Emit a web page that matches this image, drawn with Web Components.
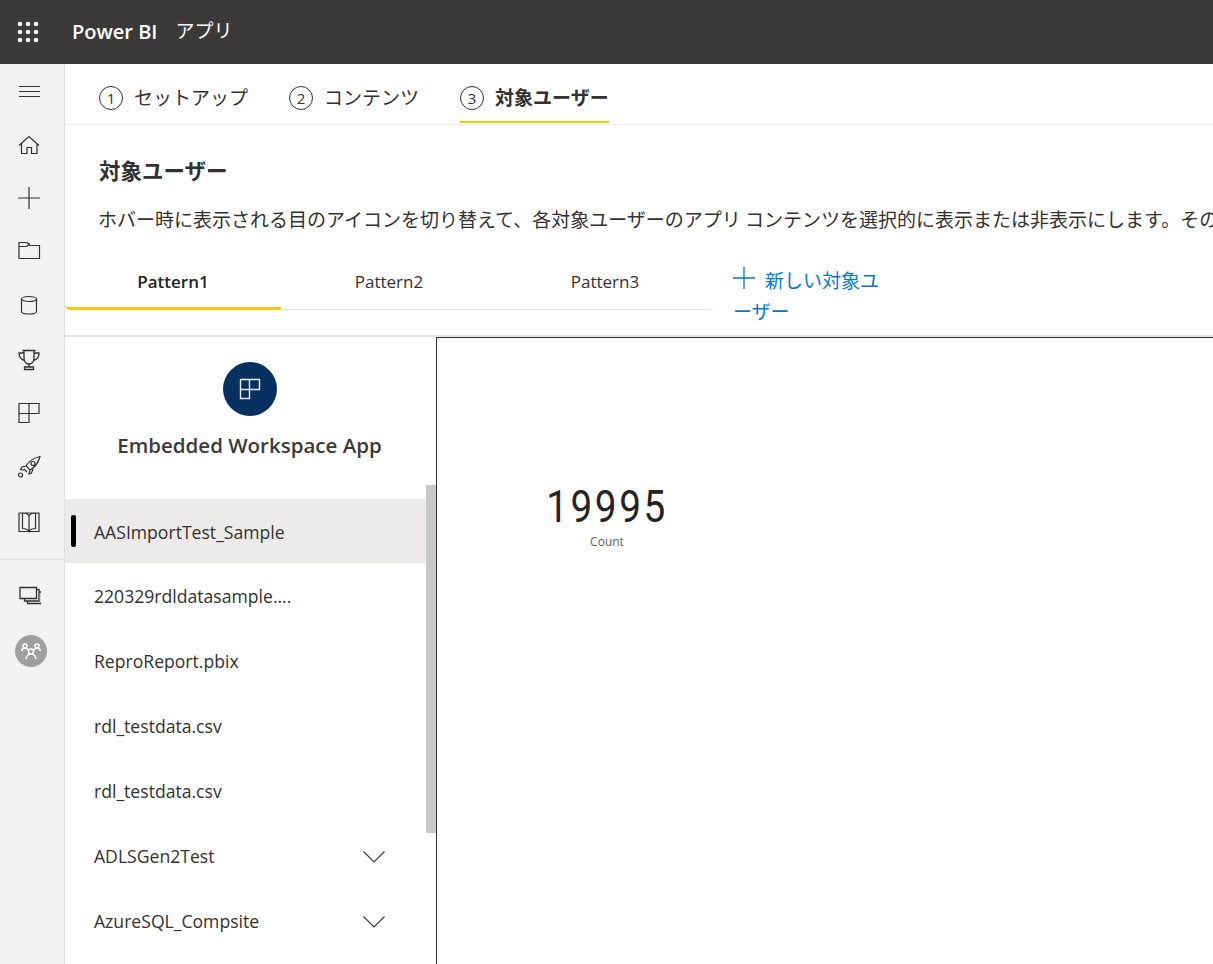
<!DOCTYPE html>
<html lang="ja"><head><meta charset="utf-8"><title>Power BI</title>
<style>
html,body{margin:0;height:964px;overflow:hidden;background:#fff}
body{font-family:"Open Sans","Noto Sans CJK JP",sans-serif;color:#252423}
pbi-app{width:1213px;height:964px}
</style></head><body>
<pbi-app></pbi-app>
<script>
const FONT='"Open Sans","Noto Sans CJK JP",sans-serif';
const JP='"Noto Sans CJK JP",sans-serif';
function def(name,html,init){customElements.define(name,class extends HTMLElement{constructor(){super();this.attachShadow({mode:'open'}).innerHTML=html;}connectedCallback(){init&&init(this)}})}
def('pbi-header',`<style>
:host{display:flex;align-items:center;height:64px;background:#3b3a39;color:#fff;flex:none}
svg{margin-left:17px;flex:none}
b{font:600 20px/26px ${FONT};margin-left:33px}
span{font:400 19px/24px ${JP};margin-left:18px;margin-top:-4px}
</style><svg width="22" height="22" viewBox="0 0 22 22" fill="#f3f2f1"><circle cx="3" cy="3" r="2.3"/><circle cx="11" cy="3" r="2.3"/><circle cx="19" cy="3" r="2.3"/><circle cx="3" cy="11" r="2.3"/><circle cx="11" cy="11" r="2.3"/><circle cx="19" cy="11" r="2.3"/><circle cx="3" cy="19" r="2.3"/><circle cx="11" cy="19" r="2.3"/><circle cx="19" cy="19" r="2.3"/></svg><b>Power BI</b><span>アプリ</span>`);

const ic=(d)=>`<svg width="24" height="24" viewBox="0 0 24 24" fill="none" stroke="#323130" stroke-width="1.2">${d}</svg>`;
def('pbi-rail',`<style>
:host{display:flex;flex-direction:column;align-items:center;width:64px;flex:none;background:#f3f2f1;border-right:1px solid #e1dfdd}
.i{width:100%;box-sizing:border-box;padding-right:7px;display:flex;align-items:center;justify-content:center;flex:none}
svg{display:block}
hr{width:100%;height:1px;border:0;background:#e1dfdd;margin:9px 0 0;flex:none}
.av{width:32px;height:32px;border-radius:50%;background:#a19f9d;display:flex;align-items:center;justify-content:center;margin:5px 3px 0 0;flex:none}
</style>
<div class="i" style="height:54px;margin-bottom:1px">${ic('<path d="M2 7.500h21M2 12.500h21M2 17.500h21" stroke-width="1"/>')}</div>
<div class="i" style="height:51px">${ic('<path d="M2 12.500 12 3.500l10 9M4.500 10.500v10h5.500v-6h4.500v6H20v-10"/>')}</div>
<div class="i" style="height:56px">${ic('<path d="M12 1v22M1 12h22"/>')}</div>
<div class="i" style="height:48px">${ic('<path d="M2 20.500V4.500h8l3 3h9.500v13zM2 8.500h8l3-3"/>')}</div>
<div class="i" style="height:62px">${ic('<ellipse cx="12" cy="6" rx="7.500" ry="2.500"/><path d="M4.500 6v12.500c0 1.500 3 2.500 7.500 2.500s7.500-1 7.500-2.500V6"/>')}</div>
<div class="i" style="height:48px">${ic('<path d="M5.500 2.500h13M7 2.500v7.500c0 3.500 2 6 5 6s5-2.500 5-6V2.500M7 5H2c0 4 1.500 6.500 5.500 7.500M17 5h5c0 4-1.500 6.500-5.500 7.500M12 16v3M7.500 19h9v2.500h-9z" stroke-width="1.300"/>')}</div>
<div class="i" style="height:58px">${ic('<path d="M2 2.500h20v10H12v9H2zM2 12.500h10v-10"/>')}</div>
<div class="i" style="height:50px">${ic('<path d="M23 1.500c-7 1.500-11 4.500-14 9.500l4 4c5-3 8.500-7 10-13.500zM9 11l-4 1-1.500 2.500 3.500.5M13 15l-1 4 2.500-1 1.500-4M7 14l3 3"/><circle cx="16" cy="8.500" r="2"/><circle cx="3.500" cy="20" r="2"/>')}</div>
<div class="i" style="height:58px">${ic('<path transform="translate(0 1)" d="M2 3h20v18.500H2zM5.500 3v15.500c3 0 5 .5 6.500 3V6C11 4 9 3 5.500 3zM18.500 3v15.500c-3 0-5 .5-6.500 3M12 6c1-2 3-3 6.500-3"/>')}</div>
<hr>
<div class="i" style="height:70px">${ic('<path d="M3 4.500h16.500v11H3zM19.500 6.500h2.500V18H7.500v-2.500M22 9h2.500v11.500H10.500V18" stroke-width="1.300"/>')}</div>
<div class="av"><svg width="22" height="22" viewBox="0 0 22 22" fill="none" stroke="#fff" stroke-width="1.600"><circle cx="11" cy="11.500" r="2.500"/><circle cx="5" cy="6" r="2"/><circle cx="17" cy="6" r="2"/><path d="M1.500 11c.5-2 1.500-3 3.500-3 1.500 0 2.500 1 3.500 2M20.500 11c-.5-2-1.500-3-3.500-3-1.500 0-2.500 1-3.500 2M6 19c.5-3 2.500-5 5-5s4.500 2 5 5"/></svg></div>`);

def('pbi-step',`<style>
:host{display:flex;align-items:center;height:60px;box-sizing:border-box;padding-top:6px;gap:11px;position:relative;font:400 19px/24px ${JP};color:#323130;white-space:nowrap}
:host([active]){font-weight:700}
:host([active])::after{content:"";position:absolute;left:0;right:0;bottom:1px;height:2px;background:#f2c811}
i{width:24px;height:24px;box-sizing:border-box;border:1px solid #323130;border-radius:50%;font:400 15px/22px ${FONT};text-align:center;flex:none;margin-top:2px}
</style><i></i><slot></slot>`,el=>{el.shadowRoot.querySelector('i').textContent=el.getAttribute('n')});

def('pbi-steps',`<style>
:host{display:flex;height:61px;flex:none;box-sizing:border-box;border-bottom:1px solid #f0efee;padding-left:34px;gap:41px}
</style><slot></slot>`);

def('pbi-intro',`<style>
:host{display:block;flex:none;overflow:hidden;padding-left:34px;height:138px;box-sizing:border-box;padding-top:30px}
h2{margin:0;font:700 21.500px/30px ${JP};color:#323130}
p{margin:22px 0 0 -1px;font:400 19px/24px ${JP};color:#323130;white-space:nowrap}
</style><h2>対象ユーザー</h2><p>ホバー時に表示される目のアイコンを切り替えて、各対象ユーザーのアプリ コンテンツを選択的に表示または非表示にします。その</p>`);

def('pbi-tab',`<style>
:host{display:flex;align-items:flex-start;justify-content:center;width:216px;height:47px;box-sizing:border-box;padding-top:7px;border-bottom:1px solid #e1dfdd;font:400 17px/24px ${FONT};color:#323130}
:host([active]){font-weight:600;border-bottom:3px solid #f2c811;border-bottom-left-radius:5px;color:#252423}
:host([last]){border-bottom-right-radius:4px}
</style><slot></slot>`);

def('pbi-tabs',`<style>
:host{display:flex;flex:none;height:74px;box-sizing:border-box;border-bottom:2px solid #e6e6e6;align-items:flex-start}
.add{margin-left:20px;width:152px;display:block;color:#0078d4;font:400 19px/30.500px ${JP};margin-top:2px}
svg{vertical-align:-1px;margin-right:10px}
</style><slot></slot><div class="add"><svg width="22" height="22" viewBox="0 0 22 22" fill="none" stroke="#0078d4" stroke-width="1.300"><path d="M11 0v22M0 11h22"/></svg>新しい対象ユーザー</div>`);

def('pbi-row',`<style>
:host{display:flex;align-items:center;height:65px;flex:none;box-sizing:border-box;padding-left:29px;padding-right:51px;position:relative;font:400 17.600px/24px ${FONT};color:#323130;white-space:nowrap}
:host([selected]){background:#edebe9;height:64px;padding-top:1px}
:host([selected])::before{content:"";position:absolute;left:6px;top:16px;width:5px;height:32px;background:#000;border-radius:2px}
span{flex:1}
svg{display:none;flex:none;margin-top:3px}
:host([exp]) svg{display:block}
</style><span><slot></slot></span><svg width="22" height="12" viewBox="0 0 22 12" fill="none" stroke="#3b3a39" stroke-width="1.200"><path d="M.5.500 11 11 21.500.500"/></svg>`);

def('pbi-nav',`<style>
:host{display:block;width:371px;flex:none;position:relative;overflow:hidden}
.head{height:162px;display:flex;flex-direction:column;align-items:center;padding-right:2px;box-sizing:border-box;padding-top:25px}
.logo{width:54px;height:54px;border-radius:50%;background:#05305f;display:flex;align-items:center;justify-content:center}
h1{margin:14px 0 0;font:600 20.500px/30px ${FONT};color:#3b3a39;white-space:nowrap}
.bar{position:absolute;left:361px;top:148px;width:10px;height:348px;background:#c8c8c8}
</style><div class="head"><div class="logo"><svg width="22" height="22" viewBox="0 0 22 22" fill="none" stroke="#e8eef5" stroke-width="1.400"><path d="M1.500 1.500h19v10h-10v9h-9zM1.500 11.500h9v-10"/></svg></div><h1>Embedded Workspace App</h1></div><slot></slot><div class="bar"></div>`);

def('pbi-card',`<style>
:host{display:block;flex:1;border:1px solid #323130;border-right:0;border-bottom:0;box-sizing:border-box;position:relative}
.v{position:absolute;left:70px;top:141px;width:200px;text-align:center}
b{display:block;font:400 45px/55px Roboto,sans-serif;letter-spacing:3px;color:#252423;transform:scaleX(.86)}
small{display:block;font:400 12px/16px ${FONT};color:#605e5c}
</style><div class="v"><b>19995</b><small>Count</small></div>`);

def('pbi-app',`<style>
:host{display:flex;flex-direction:column;font-family:${FONT};overflow:hidden}
.body{display:flex;flex:1;min-height:0}
.main{flex:1;min-width:0;display:flex;flex-direction:column;overflow:hidden}
.split{display:flex;flex:1;min-height:0}
</style>
<pbi-header></pbi-header>
<div class="body"><pbi-rail></pbi-rail>
<div class="main">
<pbi-steps><pbi-step n="1">セットアップ</pbi-step><pbi-step n="2">コンテンツ</pbi-step><pbi-step n="3" active>対象ユーザー</pbi-step></pbi-steps>
<pbi-intro></pbi-intro>
<pbi-tabs><pbi-tab active>Pattern1</pbi-tab><pbi-tab>Pattern2</pbi-tab><pbi-tab last>Pattern3</pbi-tab></pbi-tabs>
<div class="split">
<pbi-nav>
<pbi-row selected>AASImportTest_Sample</pbi-row>
<pbi-row>220329rdldatasample....</pbi-row>
<pbi-row>ReproReport.pbix</pbi-row>
<pbi-row>rdl_testdata.csv</pbi-row>
<pbi-row>rdl_testdata.csv</pbi-row>
<pbi-row exp>ADLSGen2Test</pbi-row>
<pbi-row exp>AzureSQL_Compsite</pbi-row>
</pbi-nav>
<pbi-card></pbi-card>
</div></div></div>`);
</script></body></html>
